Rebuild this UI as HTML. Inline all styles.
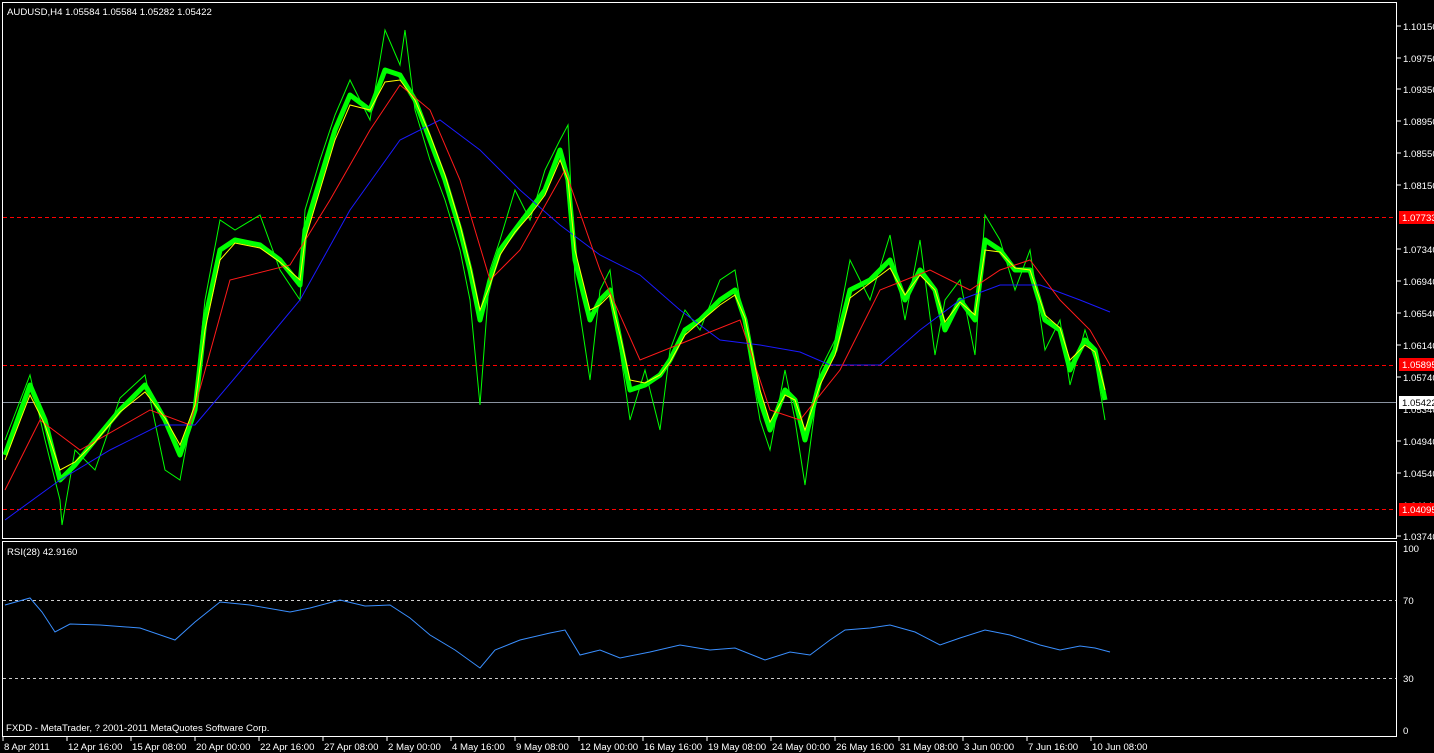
<!DOCTYPE html>
<html><head><meta charset="utf-8"><style>
html,body{margin:0;padding:0;background:#000;width:1434px;height:753px;overflow:hidden}
svg{display:block}
text{font-family:"Liberation Sans",sans-serif;font-size:9.6px;fill:#fff}
</style></head><body>
<svg width="1434" height="753" viewBox="0 0 1434 753">
<rect width="1434" height="753" fill="#000"/>
<rect x="2.5" y="2.5" width="1394" height="536" fill="none" stroke="#fff"/>
<rect x="2.5" y="541.5" width="1394" height="195" fill="none" stroke="#fff"/>
<line x1="3" y1="217.5" x2="1396" y2="217.5" stroke="#ff0000" stroke-dasharray="4,3"/>
<line x1="3" y1="365.5" x2="1396" y2="365.5" stroke="#ff0000" stroke-dasharray="4,3"/>
<line x1="3" y1="509.5" x2="1396" y2="509.5" stroke="#ff0000" stroke-dasharray="4,3"/>
<line x1="3" y1="402.5" x2="1396" y2="402.5" stroke="#8a93a0"/>
<g stroke="#ccc" stroke-dasharray="3,3">
<line x1="3" y1="600.5" x2="1396" y2="600.5"/>
<line x1="3" y1="678.5" x2="1396" y2="678.5"/>
</g>
<polyline fill="none" stroke="#00ff00" stroke-width="5" stroke-linejoin="round" points="5,455 30,385 45,420 60,480 75,465 95,440 120,410 145,385 165,420 180,455 195,410 205,320 220,250 235,240 260,245 280,260 300,285 305,230 320,180 335,130 350,95 370,110 385,70 400,75 415,100 430,140 445,180 460,230 470,270 480,320 490,280 500,250 515,230 530,210 545,190 560,150 568,180 575,260 590,320 600,300 610,290 620,340 630,390 645,385 660,375 670,360 685,330 700,320 720,300 735,290 745,320 760,400 770,430 785,390 795,400 805,440 820,380 835,350 850,290 870,280 890,260 905,300 920,270 935,290 945,330 960,300 975,320 985,240 1000,250 1015,270 1030,270 1045,320 1060,330 1070,370 1085,340 1095,350 1105,400"/>
<polyline fill="none" stroke="#00ff00" stroke-width="1" points="5,440 30,375 45,440 60,500 62,525 75,450 95,470 120,398 145,375 165,470 180,480 195,398 205,300 220,220 235,230 260,215 280,270 300,300 305,210 320,160 335,115 350,80 370,120 385,30 400,65 405,30 415,110 430,160 445,200 460,250 470,300 480,405 490,270 500,240 515,190 530,220 545,170 560,140 568,125 575,280 590,380 600,290 610,270 620,350 630,420 645,370 660,430 670,350 685,310 700,330 720,280 735,270 745,330 760,420 770,450 785,370 795,420 805,485 820,370 835,340 850,260 870,300 890,235 905,320 920,240 935,355 945,300 960,280 975,355 985,215 1000,240 1015,290 1030,250 1045,350 1060,320 1070,385 1085,330 1095,360 1105,420"/>
<polyline fill="none" stroke="#1a1aff" stroke-width="1" points="5,520 60,480 110,450 160,425 195,425 250,360 300,300 350,210 400,140 440,120 480,150 520,190 560,225 600,255 640,275 680,310 720,340 760,345 800,352 830,365 880,365 920,330 960,300 1000,285 1040,285 1080,300 1110,312"/>
<polyline fill="none" stroke="#ff1a1a" stroke-width="1" points="5,490 40,420 80,450 150,410 190,425 230,280 290,265 330,200 370,130 400,85 430,110 460,180 490,280 520,250 565,170 600,270 640,360 690,340 740,320 770,410 800,420 840,370 880,290 930,270 970,290 1000,270 1030,260 1060,300 1090,330 1110,365"/>
<polyline fill="none" stroke="#ffff00" stroke-width="1" points="5,460 30,395 45,425 60,470 75,462 95,442 120,412 145,392 165,418 180,445 195,405 205,330 220,260 235,243 260,248 280,262 300,280 305,240 320,190 335,140 350,105 370,110 385,82 400,80 415,100 430,135 445,175 460,225 470,265 480,310 490,285 500,255 515,232 530,215 545,195 560,160 568,180 575,250 590,310 600,305 610,295 620,335 630,380 645,383 660,375 670,362 685,335 700,322 720,305 735,295 745,318 760,390 770,422 785,395 795,400 805,430 820,385 835,355 850,298 870,283 890,268 905,295 920,275 935,290 945,322 960,302 975,315 985,250 1000,252 1015,268 1030,270 1045,315 1060,328 1070,360 1085,345 1095,352 1105,390"/>
<polyline fill="none" stroke="#3a8fff" stroke-width="1" points="5,605 30,598 42,612 55,632 70,624 100,625 140,628 175,640 195,622 220,602 250,605 290,612 310,608 340,600 365,606 390,605 410,618 430,635 455,650 480,668 495,650 520,640 550,633 565,630 580,655 600,650 620,658 650,652 680,645 710,650 735,648 765,660 790,652 810,655 830,640 845,630 870,628 890,625 915,632 940,645 960,638 985,630 1010,635 1040,645 1060,650 1080,646 1095,648 1110,652"/>
<text x="7" y="15">AUDUSD,H4  1.05584 1.05584 1.05282 1.05422</text>
<text x="7" y="555">RSI(28) 42.9160</text>
<text x="6" y="731">FXDD - MetaTrader, ? 2001-2011 MetaQuotes Software Corp.</text>
<g stroke="#fff">
<line x1="1397" y1="26" x2="1401" y2="26"/><line x1="1397" y1="58" x2="1401" y2="58"/><line x1="1397" y1="89" x2="1401" y2="89"/><line x1="1397" y1="121" x2="1401" y2="121"/><line x1="1397" y1="153" x2="1401" y2="153"/><line x1="1397" y1="185" x2="1401" y2="185"/><line x1="1397" y1="249" x2="1401" y2="249"/><line x1="1397" y1="281" x2="1401" y2="281"/><line x1="1397" y1="313" x2="1401" y2="313"/><line x1="1397" y1="345" x2="1401" y2="345"/><line x1="1397" y1="377" x2="1401" y2="377"/><line x1="1397" y1="441" x2="1401" y2="441"/><line x1="1397" y1="473" x2="1401" y2="473"/><line x1="1397" y1="536" x2="1401" y2="536"/>
</g>
<g>
<text x="1403" y="30">1.10150</text><text x="1403" y="62">1.09750</text><text x="1403" y="93">1.09350</text><text x="1403" y="125">1.08950</text><text x="1403" y="157">1.08550</text><text x="1403" y="189">1.08150</text><text x="1403" y="253">1.07340</text><text x="1403" y="285">1.06940</text><text x="1403" y="317">1.06540</text><text x="1403" y="349">1.06140</text><text x="1403" y="381">1.05740</text><text x="1403" y="413">1.05340</text><text x="1403" y="445">1.04940</text><text x="1403" y="477">1.04540</text><text x="1403" y="509">1.04140</text><text x="1403" y="540">1.03740</text>
</g>
<rect x="1399" y="211" width="35" height="13" fill="#f00"/><text x="1402" y="221">1.07733</text>
<rect x="1399" y="358" width="35" height="13" fill="#f00"/><text x="1402" y="368">1.05895</text>
<rect x="1399" y="503" width="35" height="13" fill="#f00"/><text x="1402" y="513">1.04095</text>
<rect x="1399" y="396" width="35" height="13" fill="#fff"/><text x="1402" y="406" style="fill:#000">1.05422</text>
<text x="1403" y="552">100</text><text x="1403" y="604">70</text><text x="1403" y="682">30</text><text x="1403" y="734">0</text>
<g stroke="#fff">
<line x1="3" y1="737" x2="3" y2="741"/><line x1="67" y1="737" x2="67" y2="741"/><line x1="131" y1="737" x2="131" y2="741"/><line x1="195" y1="737" x2="195" y2="741"/><line x1="259" y1="737" x2="259" y2="741"/><line x1="323" y1="737" x2="323" y2="741"/><line x1="387" y1="737" x2="387" y2="741"/><line x1="451" y1="737" x2="451" y2="741"/><line x1="515" y1="737" x2="515" y2="741"/><line x1="579" y1="737" x2="579" y2="741"/><line x1="643" y1="737" x2="643" y2="741"/><line x1="707" y1="737" x2="707" y2="741"/><line x1="771" y1="737" x2="771" y2="741"/><line x1="835" y1="737" x2="835" y2="741"/><line x1="899" y1="737" x2="899" y2="741"/><line x1="963" y1="737" x2="963" y2="741"/><line x1="1027" y1="737" x2="1027" y2="741"/><line x1="1091" y1="737" x2="1091" y2="741"/>
</g>
<g>
<text x="4" y="750">8 Apr 2011</text><text x="68" y="750">12 Apr 16:00</text><text x="132" y="750">15 Apr 08:00</text><text x="196" y="750">20 Apr 00:00</text><text x="260" y="750">22 Apr 16:00</text><text x="324" y="750">27 Apr 08:00</text><text x="388" y="750">2 May 00:00</text><text x="452" y="750">4 May 16:00</text><text x="516" y="750">9 May 08:00</text><text x="580" y="750">12 May 00:00</text><text x="644" y="750">16 May 16:00</text><text x="708" y="750">19 May 08:00</text><text x="772" y="750">24 May 00:00</text><text x="836" y="750">26 May 16:00</text><text x="900" y="750">31 May 08:00</text><text x="964" y="750">3 Jun 00:00</text><text x="1028" y="750">7 Jun 16:00</text><text x="1092" y="750">10 Jun 08:00</text>
</g>
</svg>
</body></html>
